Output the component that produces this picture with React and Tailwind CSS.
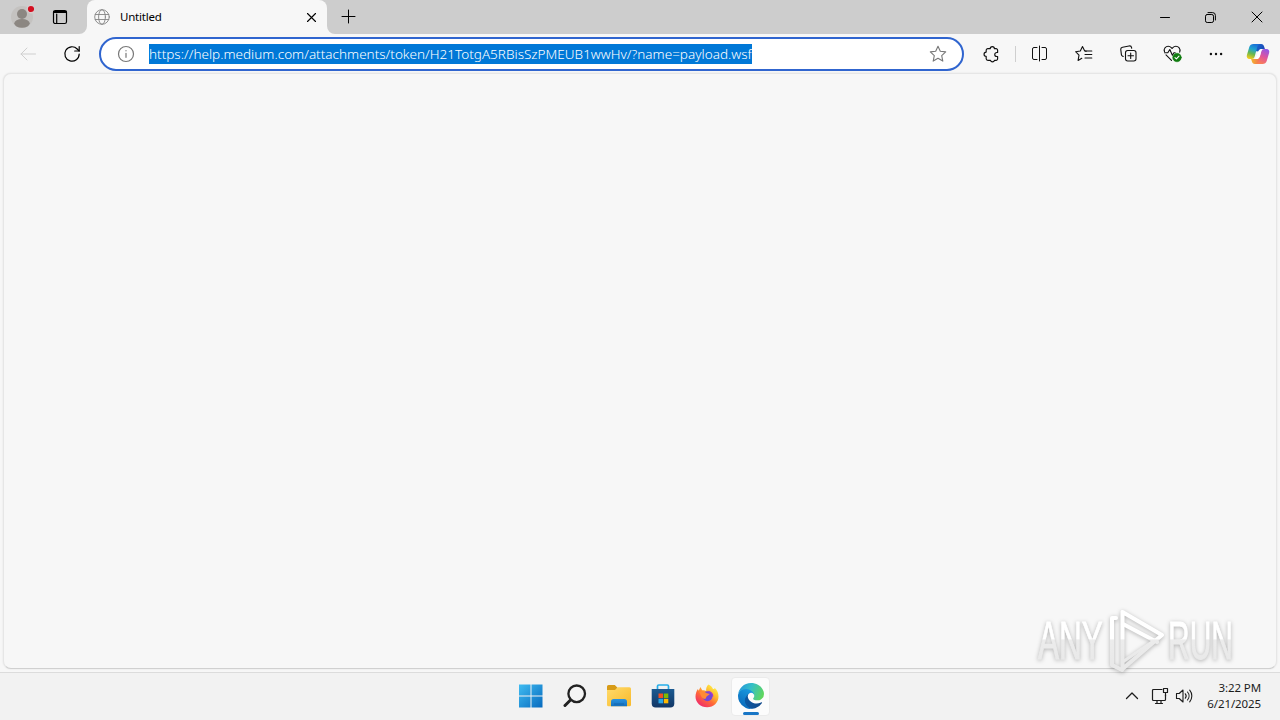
import React from "react";

const Icon = ({ size = 16, box = 16, width = 1, className = "", children }) => (
  <svg
    width={size}
    height={size}
    viewBox={`0 0 ${box} ${box}`}
    fill="none"
    stroke="currentColor"
    strokeWidth={width}
    strokeLinecap="round"
    strokeLinejoin="round"
    className={`shrink-0 ${className}`}
  >
    {children}
  </svg>
);

const Avatar = () => (
  <svg width="24" height="24" viewBox="0 0 24 24" className="shrink-0">
    <circle cx="12" cy="12" r="11" fill="#c4c2c0" />
    <circle cx="12" cy="9" r="5" fill="#8c8782" />
    <ellipse cx="12" cy="18.3" rx="7.7" ry="4.4" fill="#8c8782" />
    <circle cx="21" cy="4" r="4.4" fill="#d8cdcd" />
    <circle cx="21" cy="4" r="3.1" fill="#d30f20" />
  </svg>
);

const TabStrip = () => (
  <div className="flex h-[34px] bg-[#cdcdcd]">
    <div className="flex w-[79px] shrink-0 items-center pl-2.5">
      <Avatar />
      <Icon size={16} className="ml-[18px] text-black" width={1.2}>
        <rect x="1.5" y="1.5" width="13" height="13" rx="1.8" />
        <path d="M2 3h12" strokeWidth="2" />
        <path d="M4.7 5v9.5" />
      </Icon>
    </div>
    {/* Active tab with its flared feet */}
    <svg width="8" height="34" viewBox="0 0 8 34" className="shrink-0">
      <path d="M8 26v8H0a8 8 0 0 0 8-8Z" fill="#f7f7f7" />
    </svg>
    <div className="flex w-60 shrink-0 items-center rounded-t-lg bg-[#f7f7f7] pl-[7px] pr-2">
      <Icon size={16} className="text-[#858585]" width={0.9}>
        <circle cx="8" cy="8" r="7.3" />
        <ellipse cx="8" cy="8" rx="3.4" ry="7.3" />
        <path d="M1.3 5.5h13.4M1.3 10.5h13.4" />
      </Icon>
      <span className="ml-2.5 flex-1 text-[11.5px] leading-4 tracking-[-0.2px] text-black">Untitled</span>
      <Icon size={16} className="text-black" width={1.1}>
        <path d="m4.500 4.500 8 8M12.500 4.500l-8 8" />
      </Icon>
    </div>
    <svg width="8" height="34" viewBox="0 0 8 34" className="shrink-0">
      <path d="M0 26v8h8a8 8 0 0 1-8-8Z" fill="#f7f7f7" />
    </svg>
    <div className="flex w-[27px] items-center justify-center pb-px">
      <Icon size={15} box={15} className="text-black" width={1}>
        <path d="M7.500 1v13M1 7.500h13" />
      </Icon>
    </div>
    <div className="ml-auto flex text-black">
      <div className="flex w-[46px] items-center justify-center">
        <Icon size={10} box={10}>
          <path d="M.5 5.500h9" />
        </Icon>
      </div>
      <div className="flex w-[46px] items-center justify-center pr-px">
        <Icon size={11} box={11}>
          <rect x=".5" y="2.500" width="8" height="8" rx="1.700" />
          <path d="M3 .6h4.600a2.800 2.800 0 0 1 2.800 2.800V8" />
        </Icon>
      </div>
      <div className="flex w-[46px] items-center justify-center">
        <Icon size={12} box={12}>
          <path d="m1 1 10 10M11 1 1 11" />
        </Icon>
      </div>
    </div>
  </div>
);

const Tool = ({ children }) => (
  <div className="flex h-full w-11 shrink-0 items-center justify-center text-[#111]">{children}</div>
);

const Copilot = () => (
  <svg width="24" height="22" viewBox="0 0 24 22" className="shrink-0">
    <defs>
      <linearGradient id="copilotLeft" x1="0.6" y1="0" x2="0.3" y2="1">
        <stop offset="0" stopColor="#1a70d8" />
        <stop offset="0.35" stopColor="#1fa4cf" />
        <stop offset="0.65" stopColor="#69b84e" />
        <stop offset="1" stopColor="#f4cc1c" />
      </linearGradient>
      <linearGradient id="copilotRight" x1="0.7" y1="0" x2="0.3" y2="1">
        <stop offset="0" stopColor="#9457e6" />
        <stop offset="0.5" stopColor="#e0559c" />
        <stop offset="1" stopColor="#fb8052" />
      </linearGradient>
      <linearGradient id="copilotTop" x1="0" y1="0" x2="1" y2="0.5">
        <stop offset="0" stopColor="#1d6bd6" />
        <stop offset="1" stopColor="#1949b5" />
      </linearGradient>
      <linearGradient id="copilotBottom" x1="0" y1="0.5" x2="1" y2="0.5">
        <stop offset="0" stopColor="#f3b72d" />
        <stop offset="1" stopColor="#f4655b" />
      </linearGradient>
    </defs>
    <path d="M9 1h6.200c1.700 0 2.400 1 2.900 2.500l.8 2.500h-3.300c-1.700 0-2.700.9-3.200 2.500L9 8z" fill="url(#copilotTop)" />
    <path d="M15 21H8.800c-1.700 0-2.400-1-2.900-2.500L5.100 16h3.300c1.700 0 2.700-.9 3.200-2.500L15 14z" fill="url(#copilotBottom)" />
    <path d="M7.500 1h6c-1.300.5-1.800 1.500-2.200 3L8.700 13.500c-.5 1.700-1.300 2.500-3.200 2.500H3.600C1.200 16 .3 14.200.9 12L3.300 4C3.900 2 5.300 1 7.500 1Z" fill="url(#copilotLeft)" />
    <path d="M16.500 21h-6c1.300-.5 1.800-1.500 2.200-3l2.600-9.500c.5-1.700 1.300-2.500 3.200-2.500h1.900c2.400 0 3.300 1.800 2.700 4l-2.400 8c-.6 2-2 3-4.200 3Z" fill="url(#copilotRight)" />
    <path d="M12.400 8.500c.5-1.600 1.500-2.500 3.200-2.500h1c-.8.500-1.200 1.300-1.500 2.500l-1.500 5.500c-.5 1.500-1.300 2-2.800 2H8c1.300-.3 1.900-1.200 2.300-2.500z" fill="#fff" />
  </svg>
);

const Toolbar = () => (
  <div className="flex h-[39px] items-center bg-[#f7f7f7] pl-1.5">
    <Tool>
      <Icon className="text-[#cfcfcf]" width={1}>
        <path d="M15.500 8H1M7 2 1 8l6 6" />
      </Icon>
    </Tool>
    <Tool>
      <Icon size={18} box={18} className="text-black" width={1.2}>
        <path d="M16.200 9a7.200 7.200 0 1 1-2-5l2 2" />
        <path d="M16.200 1.500V6h-4.500" />
      </Icon>
    </Tool>
    <div className="ml-[5px] flex h-[34px] w-[865px] shrink-0 items-center rounded-full border-2 border-[#3065cf] bg-white px-4">
      <Icon size={18} box={18} className="text-[#777]" width={1.2}>
        <circle cx="9" cy="9" r="7.500" />
        <path d="M9 8.300v4M9 5.500v.3" />
      </Icon>
      <span className="ml-[14px] block h-5 whitespace-nowrap bg-[#0078d7] text-[13.5px] font-light leading-[21px] tracking-[0.01px] text-white">
        https://help.medium.com/attachments/token/H21TotgA5RBisSzPMEUB1wwHv/?name=payload.wsf
      </span>
      <Icon size={18} box={18} className="-mr-px ml-auto text-[#777]" width={1.1}>
        <path d="m9 1.300 2.300 5 5.400.6-4 3.700 1.100 5.500L9 13.300l-4.800 2.800 1.100-5.500-4-3.700 5.400-.6z" />
      </Icon>
    </div>
    <div className="ml-[5px] flex h-full items-center">
      <Tool>
        <Icon size={18} box={17} className="ml-0.5" width={1.1}>
          <path d="M4.600 3.500h2.200a2 2 0 0 1 4 0h1.500a1.500 1.500 0 0 1 1.500 1.500v2.100h-.8a1.900 1.900 0 0 0 0 3.800h.8v2.100a1.500 1.500 0 0 1-1.500 1.500h-1.500a1.900 1.900 0 0 1-3.700 0H4.600A1.600 1.600 0 0 1 3 13v-2.300a2 2 0 0 1 0-4V5.100a1.600 1.600 0 0 1 1.600-1.600Z" />
        </Icon>
      </Tool>
      <div className="mx-0.5 h-4 w-px bg-[#cfcfcf]" />
      <Tool>
        <Icon size={17} box={17} className="-ml-px" width={1}>
          <path d="M6 2.500H3A1.500 1.500 0 0 0 1.500 4v9A1.500 1.500 0 0 0 3 14.500h3M11 2.500h3A1.500 1.500 0 0 1 15.500 4v9a1.500 1.500 0 0 1-1.500 1.500h-3M8.500 1v15" />
        </Icon>
      </Tool>
      <Tool>
        <Icon size={18} box={18} width={1.1}>
          <path d="M11.300 6.200 9.700 5.900 7.500 1.500 5.300 6l-4.700.7L4 10.200l-.9 5.200 3.700-2.100" />
          <path d="M10.500 6h6.300M10 9.500h6.800M10 13h6.800" />
        </Icon>
      </Tool>
      <Tool>
        <Icon size={17} box={17} width={1.1}>
          <path d="m3.200 11.500-.8-.4a2 2 0 0 1-1-1.500L.8 4.700A2.200 2.200 0 0 1 2.600 2.200L9 1a2.200 2.200 0 0 1 2.600 1.700l.1.600" />
          <rect x="5.500" y="5.500" width="10.500" height="10.500" rx="2.200" />
          <path d="M10.700 8v5.500M8 10.700h5.500" />
        </Icon>
      </Tool>
      <Tool>
        <Icon size={19} box={19} width={1.1}>
          <path d="M1.500 7.600a4 4 0 0 1 .5-3.800C3.700 1.800 6.500 1.700 8.300 3.700L9 4.500l.8-.8c1.800-2 4.500-1.900 6.200 0 1.100 1.300 1.200 3 .7 4.500" />
          <path d="M1.500 8.800h3.300l2-3.300 2.600 5.800 1.500-2.500h1.300M3 10.800l5.500 5.500" />
          <circle cx="14" cy="13.500" r="4.300" fill="#107c10" stroke="#107c10" strokeWidth=".5" />
          <path d="m12 13.600 1.400 1.300 2.600-2.700" stroke="#fff" />
        </Icon>
      </Tool>
      <Tool>
        <svg width="16" height="4" viewBox="0 0 16 4" fill="currentColor">
          <circle cx="2.900" cy="2" r="1.200" />
          <circle cx="8" cy="2" r="1.200" />
          <circle cx="13.100" cy="2" r="1.200" />
        </svg>
      </Tool>
      <div className="flex w-10 justify-center">
        <Copilot />
      </div>
    </div>
  </div>
);

const WindowsLogo = () => (
  <svg width="24" height="24" viewBox="0 0 24 24">
    <defs>
      <linearGradient id="win" x1="0" y1="0" x2="24" y2="24" gradientUnits="userSpaceOnUse">
        <stop stopColor="#40bdf2" />
        <stop offset="1" stopColor="#0668bd" />
      </linearGradient>
    </defs>
    <path d="M0 .5h11.500v11H0zM12.500.5H23.500v11H12.500zM0 12.500h11.500v11H0zM12.500 12.500H23.500v11H12.500z" fill="url(#win)" />
  </svg>
);

const SearchGlyph = () => (
  <svg width="24" height="24" viewBox="0 0 24 24" fill="none" stroke="#222" strokeLinecap="round">
    <circle cx="13.700" cy="9.800" r="8.300" strokeWidth="2.300" fill="#f4f4f4" />
    <path d="m7.500 16-5.500 5.500" strokeWidth="3" />
  </svg>
);

const Explorer = () => (
  <svg width="26" height="24" viewBox="0 0 26 24">
    <defs>
      <linearGradient id="folder" x1="0" y1="0" x2="1" y2="1">
        <stop stopColor="#ffdb6b" />
        <stop offset="1" stopColor="#f8b92b" />
      </linearGradient>
      <linearGradient id="shelf" x1="0" y1="0" x2="0" y2="1">
        <stop stopColor="#2a93e0" />
        <stop offset="1" stopColor="#1470bd" />
      </linearGradient>
    </defs>
    <path d="M1 2.500A1.500 1.500 0 0 1 2.500 1h6.300l2.500 2.500V8H1z" fill="#d79b17" />
    <path d="M1 6h8l2.500-2.700h12A1.500 1.500 0 0 1 25 4.800v16a1.500 1.500 0 0 1-1.500 1.500h-21A1.500 1.500 0 0 1 1 20.800z" fill="url(#folder)" />
    <path d="M5 22.300v-4.600a2.700 2.700 0 0 1 2.700-2.700h10.600a2.700 2.700 0 0 1 2.700 2.700v4.600z" fill="url(#shelf)" />
    <path d="M8 20h10" stroke="#125fa5" strokeWidth="0.8" />
  </svg>
);

const Store = () => (
  <svg width="24" height="24" viewBox="0 0 24 24">
    <defs>
      <linearGradient id="bag" x1="0" y1="0" x2="0" y2="1">
        <stop stopColor="#1b5a91" />
        <stop offset="1" stopColor="#123766" />
      </linearGradient>
    </defs>
    <path d="M6.500 5.500V2.200A1.200 1.200 0 0 1 7.700 1h8.600a1.200 1.200 0 0 1 1.200 1.200v3.300" fill="none" stroke="#27aee9" strokeWidth="1.700" />
    <path d="M.7 5h22.600v14.500a4 4 0 0 1-4 4H4.700a4 4 0 0 1-4-4z" fill="url(#bag)" />
    <path d="M7.500 9.500H12V14H7.500z" fill="#f25022" />
    <path d="M12.800 9.500h4.500V14h-4.500z" fill="#7fba00" />
    <path d="M7.500 14.800H12v4.500H7.500z" fill="#28a8ea" />
    <path d="M12.800 14.800h4.500v4.500h-4.500z" fill="#ffb900" />
  </svg>
);

const Firefox = () => (
  <svg width="26" height="26" viewBox="0 0 26 26">
    <defs>
      <linearGradient id="fox" x1="0.85" y1="0.1" x2="0.2" y2="0.95">
        <stop stopColor="#fff04a" />
        <stop offset="0.3" stopColor="#ffbd2e" />
        <stop offset="0.6" stopColor="#ff6a38" />
        <stop offset="1" stopColor="#ef2a6c" />
      </linearGradient>
    </defs>
    <path d="M14.500 1.500c2.400 1 3.800 2.800 4.500 4.500.9.300 1.600.1 1.600-1.300C23.500 7 24.500 10.500 24.500 13.500c0 6.200-5 10.700-11.300 10.700C6.600 24.200 1.500 19.500 1.500 13.700c0-3 1-5.700 2.400-7.700l.8 1.800L6.400 4l1.800 3.300c1.400-.4 2.900-.1 4 .8-.4-2.500.4-5 2.300-6.600Z" fill="url(#fox)" />
    <circle cx="13.500" cy="13.300" r="5" fill="#7547d7" />
    <path d="M5.200 9c2.200-1.400 5-1 6.800.7 1 .9 2.800.7 3.700 1.100-.2 1.600-2.600 1.800-3.100 2.700-.7 1.200-.5 1.800-1.500 2.500-1.500 0-3.500-1-4-3z" fill="#ff8a35" />
    <path d="M14.200 8.700c2.800.4 4.500 2.400 4.500 4.800" stroke="#a43bd0" strokeWidth="1.300" fill="none" />
  </svg>
);

const Edge = () => (
  <svg width="26" height="26" viewBox="0 0 256 256">
    <defs>
      <linearGradient id="edgeDeep" x1="0" y1="0.7" x2="1" y2="0.7">
        <stop stopColor="#0c59a4" />
        <stop offset="1" stopColor="#114a8b" />
      </linearGradient>
      <linearGradient id="edgeMid" x1="0.7" y1="0" x2="0.2" y2="1">
        <stop stopColor="#1b9de2" />
        <stop offset="1" stopColor="#0865b7" />
      </linearGradient>
      <linearGradient id="edgeTop" x1="0" y1="0.3" x2="1" y2="0.6">
        <stop stopColor="#2497dc" />
        <stop offset="0.45" stopColor="#35bfc7" />
        <stop offset="1" stopColor="#61d75b" />
      </linearGradient>
    </defs>
    <path d="M231 190.500c-3.400 1.800-6.900 3.300-10.500 4.700a101.800 101.800 0 0 1-35.900 6.500c-47.300 0-88.500-32.600-88.500-74.300a31.500 31.500 0 0 1 16.400-27.300c-42.800 1.800-53.800 46.400-53.800 72.500 0 74 68.100 81.400 82.800 81.400 7.900 0 19.800-2.300 27-4.600l1.300-.4a128.300 128.300 0 0 0 66.600-52.800 4 4 0 0 0-5.400-5.700Z" fill="url(#edgeDeep)" />
    <path d="M105.700 241.400A79.200 79.200 0 0 1 83 220.100a80.700 80.700 0 0 1 29.500-120c3.200-1.500 8.500-4.200 15.600-4a32.400 32.400 0 0 1 25.700 13 31.900 31.900 0 0 1 6.300 18.600c0-.2 24.500-79.600-80-79.600C36.100 48.100 0 89.800 0 126.300a130.500 130.500 0 0 0 12.100 56 128 128 0 0 0 156.400 67 75.500 75.500 0 0 1-62.800-7.900Z" fill="url(#edgeMid)" />
    <path d="M152.300 148.900c-.9 1-3.400 2.500-3.400 5.600 0 2.600 1.700 5.200 4.800 7.300 14.300 10 41.400 8.600 41.500 8.600a59.600 59.600 0 0 0 30.300-8.300 61.400 61.400 0 0 0 30.400-52.900c.3-22.400-8-37.300-11.300-43.900C223.500 23.900 177.700 0 128 0A128 128 0 0 0 0 126.200c.5-36.500 36.800-66 80-66 3.500 0 23.500.3 42 10a72.600 72.600 0 0 1 30.900 29.300c6.100 10.600 7.200 24.100 7.200 29.500s-2.700 13.300-7.800 19.900Z" fill="url(#edgeTop)" />
  </svg>
);

const apps = [
  { name: "start", Glyph: WindowsLogo },
  { name: "search", Glyph: SearchGlyph },
  { name: "explorer", Glyph: Explorer },
  { name: "store", Glyph: Store },
  { name: "firefox", Glyph: Firefox },
];

const Taskbar = () => (
  <div className="grid h-12 grid-cols-[1fr_264px_1fr] border-t border-[#dcdcdc] bg-[#f2f2f2] pb-px">
    <div />
    <div className="flex">
      {apps.map(({ name, Glyph }) => (
        <div key={name} className="flex w-11 items-center justify-center pl-px">
          <Glyph />
        </div>
      ))}
      <div className="flex w-11 items-center justify-center">
        <div className="ml-px flex h-[39px] w-[39px] flex-col items-center justify-between rounded border border-[#ebebeb] bg-[#fcfcfc] pt-[5px]">
          <Edge />
          <div className="h-[3px] w-4 rounded-full bg-[#1976c6]" />
        </div>
      </div>
    </div>
    <div className="flex items-center justify-end pr-[19px] text-[#1c1c1c]">
      <Icon size={14} box={14} width={1.3}>
        <path d="m1.500 9.500 5.500-5.500 5.500 5.500" />
      </Icon>
      <Icon size={18} box={18} className="ml-3" width={1.2}>
        <path d="M11 2.500H2.500a1 1 0 0 0-1 1v9a1 1 0 0 0 1 1h11a1 1 0 0 0 1-1V8M6 13.500v3M10 13.500v3M4.500 16.500h7" />
        <path d="M12.500 1.500h4v4h-4zM14.500 5.500V9" />
      </Icon>
      <Icon size={18} box={18} className="ml-1.5" width={1.1}>
        <path d="M1.500 6.500h2.700L8 3v12l-3.800-3.500H1.500z" />
        <path d="M10.300 6.800a3.500 3.500 0 0 1 0 4.400M12.500 5a6 6 0 0 1 0 8M14.700 3.200a9 9 0 0 1 0 11.600" />
      </Icon>
      <div className="ml-3.5 w-[54px] whitespace-nowrap text-right text-[11.5px] leading-4 tracking-[-0.1px]">
        <div>3:22 PM</div>
        <div className="flex justify-end">6/21/2025</div>
      </div>
    </div>
  </div>
);

const Watermark = () => (
  <svg
    width="220"
    height="76"
    viewBox="0 0 220 76"
    className="pointer-events-none absolute left-[1030px] top-[600px] drop-shadow-[0_1px_2px_rgba(0,0,0,0.28)]"
  >
    <defs>
      <linearGradient id="mark" x1="0" y1="18" x2="0" y2="60" gradientUnits="userSpaceOnUse">
        <stop offset="0.5" stopColor="#ffffff" />
        <stop offset="0.52" stopColor="#ececec" />
        <stop offset="1" stopColor="#e9e9e9" />
      </linearGradient>
    </defs>
    <g fill="url(#mark)" stroke="url(#mark)" strokeWidth="0.8" fontFamily="Liberation Sans, sans-serif" fontSize="53">
      <text x="0" y="59" transform="translate(8 0) scale(0.596 1)">ANY</text>
      <text x="0" y="59" transform="translate(138 0) scale(0.566 1)">RUN</text>
    </g>
    <g fill="none" stroke="url(#mark)" strokeLinejoin="round" strokeLinecap="round">
      <path d="M92.500 12v57l39.500-34z" strokeWidth="4" />
      <path d="M86 18h-4v47l10 5M93 24l34 18" strokeWidth="4" />
      <path d="M94 61l31-21" strokeWidth="3" />
    </g>
  </svg>
);

const App = () => {
  return (
    <div className="relative flex h-[720px] w-[1280px] flex-col overflow-hidden bg-[#f7f7f7] font-['Noto_Sans','Open_Sans',sans-serif]">
      <TabStrip />
      <Toolbar />
      <div className="mx-[3px] mb-[3px] flex-1 rounded-lg border border-[#e6e6e6] border-b-[#d0d0d0] bg-[#f7f7f7] shadow-[0_0_2px_rgba(0,0,0,0.1)]" />
      <Taskbar />
      <Watermark />
    </div>
  );
};

export default App;
